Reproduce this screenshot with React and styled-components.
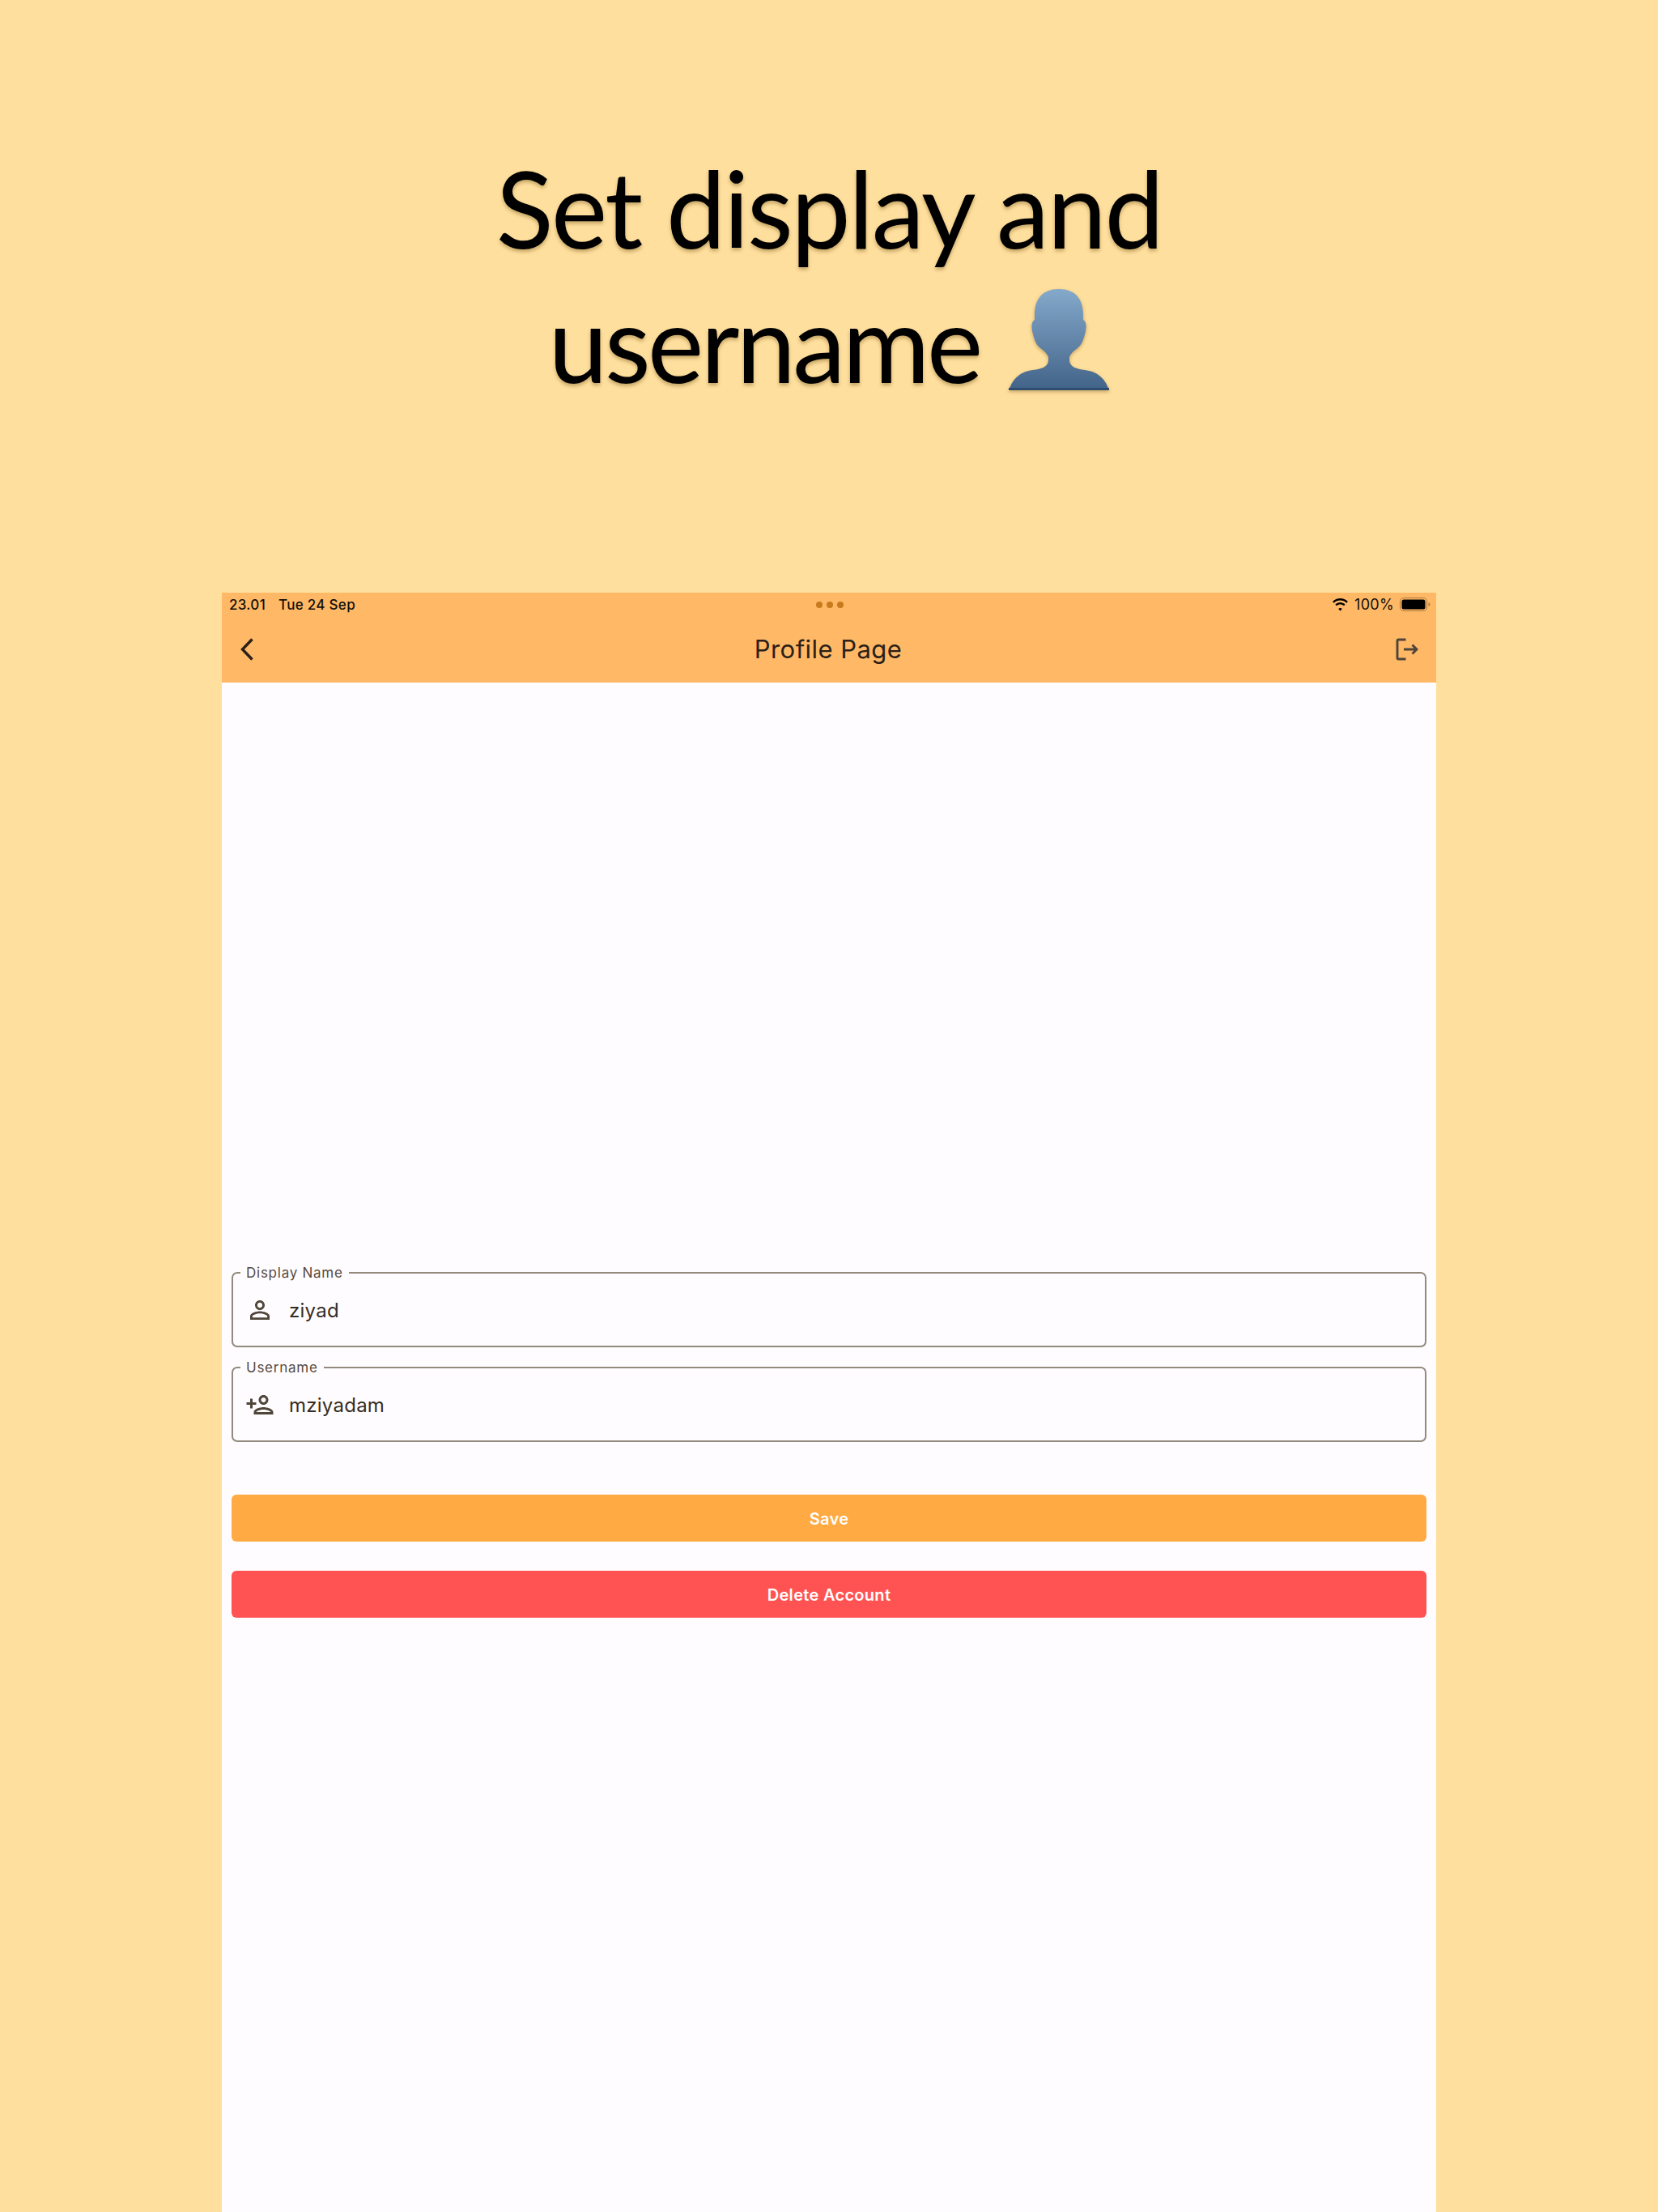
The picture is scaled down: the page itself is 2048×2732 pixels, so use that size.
import React from "react";
import styled, { createGlobalStyle } from "styled-components";

const Global = createGlobalStyle`
  html, body { margin: 0; padding: 0; background: #ffdf9d; }
  body { font-family: Inter, "Liberation Sans", sans-serif; }
`;

const Page = styled.div`
  width: 2048px;
  height: 2732px;
  overflow: hidden;
  display: flex;
  flex-direction: column;
  align-items: center;
  background: #ffdf9d;
`;

const Hero = styled.header`
  height: 732px;
  box-sizing: border-box;
  padding-top: 174px;
  flex: none;
`;

const Title = styled.h1`
  margin: 0;
  font-family: "Lato", "Open Sans", sans-serif;
  font-weight: 400;
  font-size: 131px;
  line-height: 166px;
  color: #000;
  text-align: center;
  text-shadow: 0 3px 4px rgba(90, 60, 0, 0.35);
  white-space: nowrap;
`;

const TitleLine = styled.div`
  display: flex;
  justify-content: center;
  align-items: flex-end;
  gap: 36px;
  letter-spacing: ${(p) => p.$spacing}px;
`;

const Bust = styled.svg`
  width: 124px;
  height: 125px;
  margin-bottom: 24px;
  flex: none;
  filter: drop-shadow(0 2px 2px rgba(90, 60, 0, 0.35));
`;

const Frame = styled.main`
  width: 1500px;
  flex: 1;
  background: #fffcff;
  display: flex;
  flex-direction: column;
`;

const AppBar = styled.div`
  height: 111px;
  flex: none;
  background: #ffb866;
  position: relative;
  display: flex;
  flex-direction: column;
`;

const StatusBar = styled.div`
  height: 28px;
  box-sizing: border-box;
  padding: 1px 7px 0 9px;
  display: grid;
  grid-template-columns: 1fr auto 1fr;
  align-items: center;
  font-size: 17px;
  font-weight: 500;
  letter-spacing: 0.3px;
  color: #14100a;
`;

const Clock = styled.div`
  display: flex;
  gap: 16px;
`;

const Dots = styled.div`
  display: flex;
  gap: 5px;
`;

const Dot = styled.span`
  width: 8px;
  height: 8px;
  border-radius: 50%;
  background: #c87a1c;
`;

const StatusRight = styled.div`
  display: flex;
  justify-content: flex-end;
  align-items: center;
  gap: 7px;
  font-size: 18px;
  font-weight: 400;
`;

const Battery = styled.svg`
  width: 38px;
  height: 18px;
  flex: none;
`;

const NavRow = styled.div`
  flex: 1;
  display: grid;
  grid-template-columns: 1fr auto 1fr;
  align-items: center;
  padding: 0 22px 0 20px;
`;

const NavTitle = styled.div`
  font-size: 31px;
  font-weight: 400;
  letter-spacing: 0.45px;
  color: #2a2118;
  line-height: 40px;
`;

const NavIcon = styled.svg`
  display: block;
  width: ${(p) => p.$size}px;
  height: ${(p) => p.$size}px;
  justify-self: ${(p) => (p.$end ? "end" : "start")};
`;

const Form = styled.form`
  padding: 718px 12px 0;
  display: flex;
  flex-direction: column;
`;

const Field = styled.fieldset`
  margin: 0 0 14px;
  padding: 0 0 0 9px;
  height: 103px;
  box-sizing: border-box;
  border: 2px solid #928a7d;
  border-radius: 7px;
  display: block;
  min-width: 0;
`;

const FieldLabel = styled.legend`
  padding: 0 7px;
  font-size: 17px;
  line-height: 22px;
  letter-spacing: 0.75px;
  color: #554b3f;
`;

const FieldRow = styled.div`
  display: flex;
  align-items: center;
  gap: 18px;
  height: 58px;
  margin: 6px 0 0 6px;
`;

const FieldIcon = styled.svg`
  width: 36px;
  height: 36px;
  flex: none;
  fill: #4f4539;
`;

const FieldValue = styled.span`
  font-size: 24px;
  letter-spacing: 0.25px;
  color: #362d23;
`;

const ActionButton = styled.button`
  display: block;
  width: 100%;
  height: 58px;
  margin-top: ${(p) => p.$gap}px;
  padding: 2px 0 0;
  border: 0;
  border-radius: 6px;
  background: ${(p) => p.$bg};
  color: #fff;
  font-family: inherit;
  font-size: 20px;
  font-weight: 600;
  letter-spacing: 0.3px;
`;

export default function App() {
  return (
    <Page>
      <Global />
      <Hero>
        <Title>
          <TitleLine $spacing={-2.4}>Set display and</TitleLine>
          <TitleLine $spacing={-3.6}>
            username
            <Bust viewBox="0 0 124 125">
              <defs>
                <linearGradient id="bust" x1="0" y1="0" x2="0" y2="1">
                  <stop offset="0" stopColor="#84a9cb" />
                  <stop offset="1" stopColor="#426388" />
                </linearGradient>
              </defs>
              <path
                fill="url(#bust)"
                d="M62 0C42 0 32 12 32 32V38C28 40 28 46 29 52C31 60 33 68 38 72C40 74 47 78 49 84V88C49 96 40 99 30 100C16 102 6 108 0 125H124C118 108 108 102 94 100C84 99 75 96 75 88V84C77 78 84 74 86 72C91 68 93 60 95 52C96 46 96 40 92 38V32C92 12 82 0 62 0Z"
              />
              <rect x="0" y="122" width="124" height="3" fill="#2f4d70" />
            </Bust>
          </TitleLine>
        </Title>
      </Hero>
      <Frame>
        <AppBar>
          <StatusBar>
            <Clock>
              <span>23.01</span>
              <span>Tue 24 Sep</span>
            </Clock>
            <Dots>
              <Dot />
              <Dot />
              <Dot />
            </Dots>
            <StatusRight>
              <svg width="21" height="16" viewBox="0 0 21 16">
                <path
                  fill="#000"
                  d="M10.5 2.6c3 0 5.7 1.1 7.8 3.1l1.6-1.7C17.4 1.5 14.1 0 10.5 0S3.6 1.5 1.1 4l1.6 1.7c2.1-2 4.8-3.1 7.8-3.1zm0 4.8c1.7 0 3.3.6 4.5 1.8l1.6-1.7c-1.6-1.6-3.8-2.6-6.1-2.6s-4.5 1-6.1 2.6L6 9.2c1.2-1.2 2.8-1.8 4.5-1.8zm0 4.6c-.9 0-1.7.4-2.3 1l2.3 2.6 2.3-2.6c-.6-.6-1.4-1-2.3-1z"
                />
              </svg>
              <span>100%</span>
              <Battery viewBox="0 0 38 18">
                <rect x="0.5" y="0.5" width="33" height="16" rx="4.5" fill="none" stroke="#a87a3c" />
                <rect x="2.5" y="2.5" width="29" height="12" rx="2.5" fill="#000" />
                <path d="M35.5 6v5c1.2-.4 1.8-1.4 1.8-2.5S36.7 6.400 35.500 6z" fill="#a87a3c" />
              </Battery>
            </StatusRight>
          </StatusBar>
          <NavRow>
            <NavIcon $size={28} viewBox="0 0 28 28" fill="none">
              <path d="M17.5 1.500 5.500 14l12 12.500" stroke="#2a2118" strokeWidth="3.4" />
            </NavIcon>
            <NavTitle>Profile Page</NavTitle>
            <NavIcon $end $size={28} viewBox="0 0 28 28" fill="none" stroke="#4f4539" strokeWidth="2.9">
              <path d="M12.500 2H3.500a1.500 1.500 0 0 0-1.500 1.500v21A1.500 1.500 0 0 0 3.500 26h9" />
              <path d="M10 14h16M20.500 8.500 26 14l-5.500 5.500" />
            </NavIcon>
          </NavRow>
        </AppBar>
        <Form>
          <Field>
            <FieldLabel>Display Name</FieldLabel>
            <FieldRow>
              <FieldIcon viewBox="0 0 24 24">
                <path d="M12 5.900c1.160 0 2.100.94 2.100 2.100s-.94 2.100-2.100 2.100S9.900 9.160 9.900 8s.94-2.100 2.100-2.100m0 9c2.970 0 6.100 1.460 6.100 2.100v1.100H5.900V17c0-.64 3.130-2.100 6.100-2.100M12 4C9.790 4 8 5.790 8 8s1.790 4 4 4 4-1.790 4-4-1.790-4-4-4zm0 9c-2.670 0-8 1.340-8 4v3h16v-3c0-2.660-5.330-4-8-4z" />
              </FieldIcon>
              <FieldValue>ziyad</FieldValue>
            </FieldRow>
          </Field>
          <Field>
            <FieldLabel>Username</FieldLabel>
            <FieldRow>
              <FieldIcon viewBox="0 0 24 24">
                <path d="M15 6c1.100 0 2 .9 2 2s-.9 2-2 2-2-.9-2-2 .9-2 2-2m0-2c-2.210 0-4 1.790-4 4s1.790 4 4 4 4-1.790 4-4-1.790-4-4-4zm0 10c-2.670 0-8 1.340-8 4v2h16v-2c0-2.660-5.330-4-8-4zm-6 4c.22-.72 3.310-2 6-2 2.700 0 5.800 1.290 6 2H9zM6 15v-3h3v-2H6V7H4v3H1v2h3v3h2z" />
              </FieldIcon>
              <FieldValue>mziyadam</FieldValue>
            </FieldRow>
          </Field>
          <ActionButton type="button" $bg="#ffaa42" $gap={51}>
            Save
          </ActionButton>
          <ActionButton type="button" $bg="#ff5252" $gap={36}>
            Delete Account
          </ActionButton>
        </Form>
      </Frame>
    </Page>
  );
}
